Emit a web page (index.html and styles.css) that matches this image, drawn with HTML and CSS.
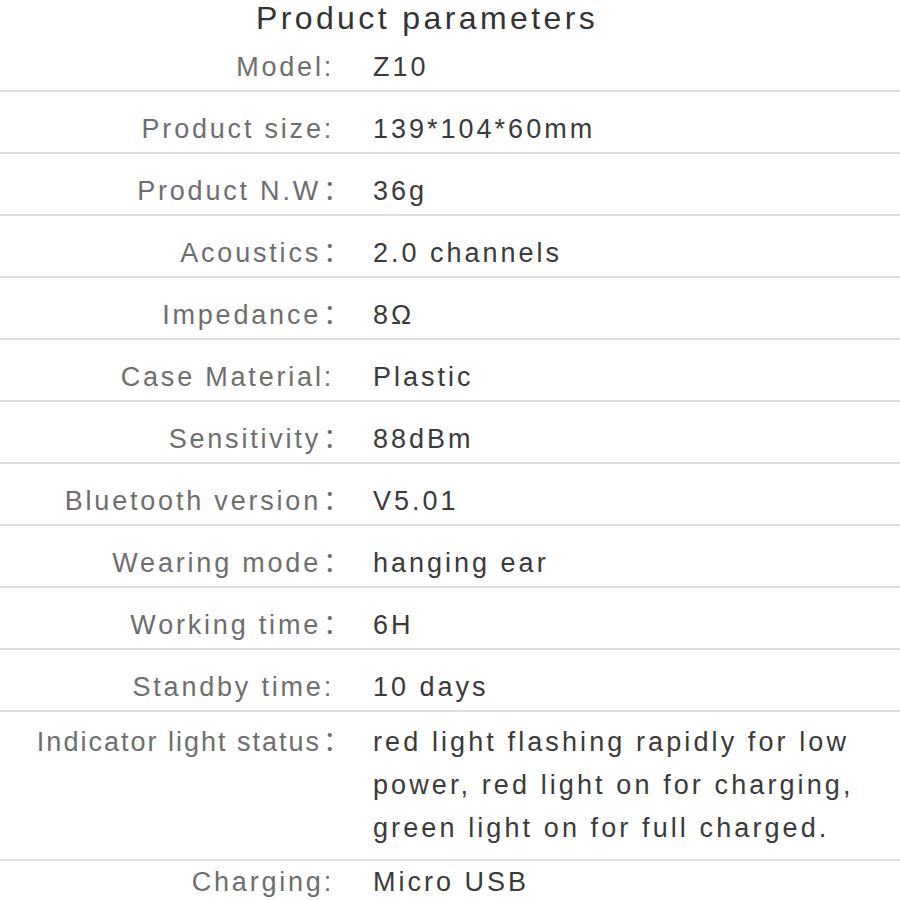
FILE: index.html
```html
<!DOCTYPE html>
<html lang="en">
<head>
<meta charset="utf-8">
<title>Product parameters</title>
<link rel="stylesheet" href="styles.css">
</head>
<body>
<div class="sheet">
  <h1 class="title">Product parameters</h1>
  <div class="row"><div class="label">Model:</div><div class="value">Z10</div></div>
  <div class="row"><div class="label">Product size:</div><div class="value">139*104*60mm</div></div>
  <div class="row"><div class="label">Product N.W<span class="fw">：</span></div><div class="value">36g</div></div>
  <div class="row"><div class="label">Acoustics<span class="fw">：</span></div><div class="value">2.0 channels</div></div>
  <div class="row"><div class="label">Impedance<span class="fw">：</span></div><div class="value">8Ω</div></div>
  <div class="row"><div class="label">Case Material:</div><div class="value">Plastic</div></div>
  <div class="row"><div class="label">Sensitivity<span class="fw">：</span></div><div class="value">88dBm</div></div>
  <div class="row"><div class="label">Bluetooth version<span class="fw">：</span></div><div class="value">V5.01</div></div>
  <div class="row"><div class="label">Wearing mode<span class="fw">：</span></div><div class="value">hanging ear</div></div>
  <div class="row"><div class="label">Working time<span class="fw">：</span></div><div class="value">6H</div></div>
  <div class="row"><div class="label">Standby time:</div><div class="value">10 days</div></div>
  <div class="row row-multi"><div class="label">Indicator light status<span class="fw">：</span></div><div class="value">red light flashing rapidly for low power, red light on for charging, green light on for full charged.</div></div>
  <div class="row row-last"><div class="label">Charging:</div><div class="value">Micro USB</div></div>
</div>
</body>
</html>
```

FILE: styles.css
```css
html, body {
  margin: 0;
  padding: 0;
  background: #ffffff;
}

.sheet {
  width: 900px;
  height: 900px;
  overflow: hidden;
  font-family: "Liberation Sans", Arial, sans-serif;
}

.title {
  margin: 0;
  height: 30px;
  line-height: 36px;
  text-align: center;
  font-size: 32px;
  font-weight: normal;
  letter-spacing: 3.4px;
  color: #333333;
  padding-right: 46px;
}

.row {
  display: grid;
  grid-template-columns: 334px 1fr;
  column-gap: 39px;
  height: 32px;
  padding: 21px 0 7px;
  border-bottom: 2px solid #dedede;
  font-size: 27px;
  line-height: 32px;
}

.label {
  text-align: right;
  color: #6e6e6e;
  white-space: nowrap;
  letter-spacing: 2.8px;
}

.value {
  color: #3a3a3a;
  letter-spacing: 3px;
}

.fw {
  font-family: "Noto Sans CJK SC", sans-serif;
  letter-spacing: 0;
  line-height: 0;
  margin-left: 2px;
  margin-right: -16px;
}

.row-multi {
  height: auto;
  padding: 9px 0 9px;
  line-height: 43px;
}

.row-multi .label {
  letter-spacing: 2px;
}

.row-multi .value {
  letter-spacing: 3.1px;
}

.row-last {
  border-bottom: none;
  padding-top: 5px;
}
```
